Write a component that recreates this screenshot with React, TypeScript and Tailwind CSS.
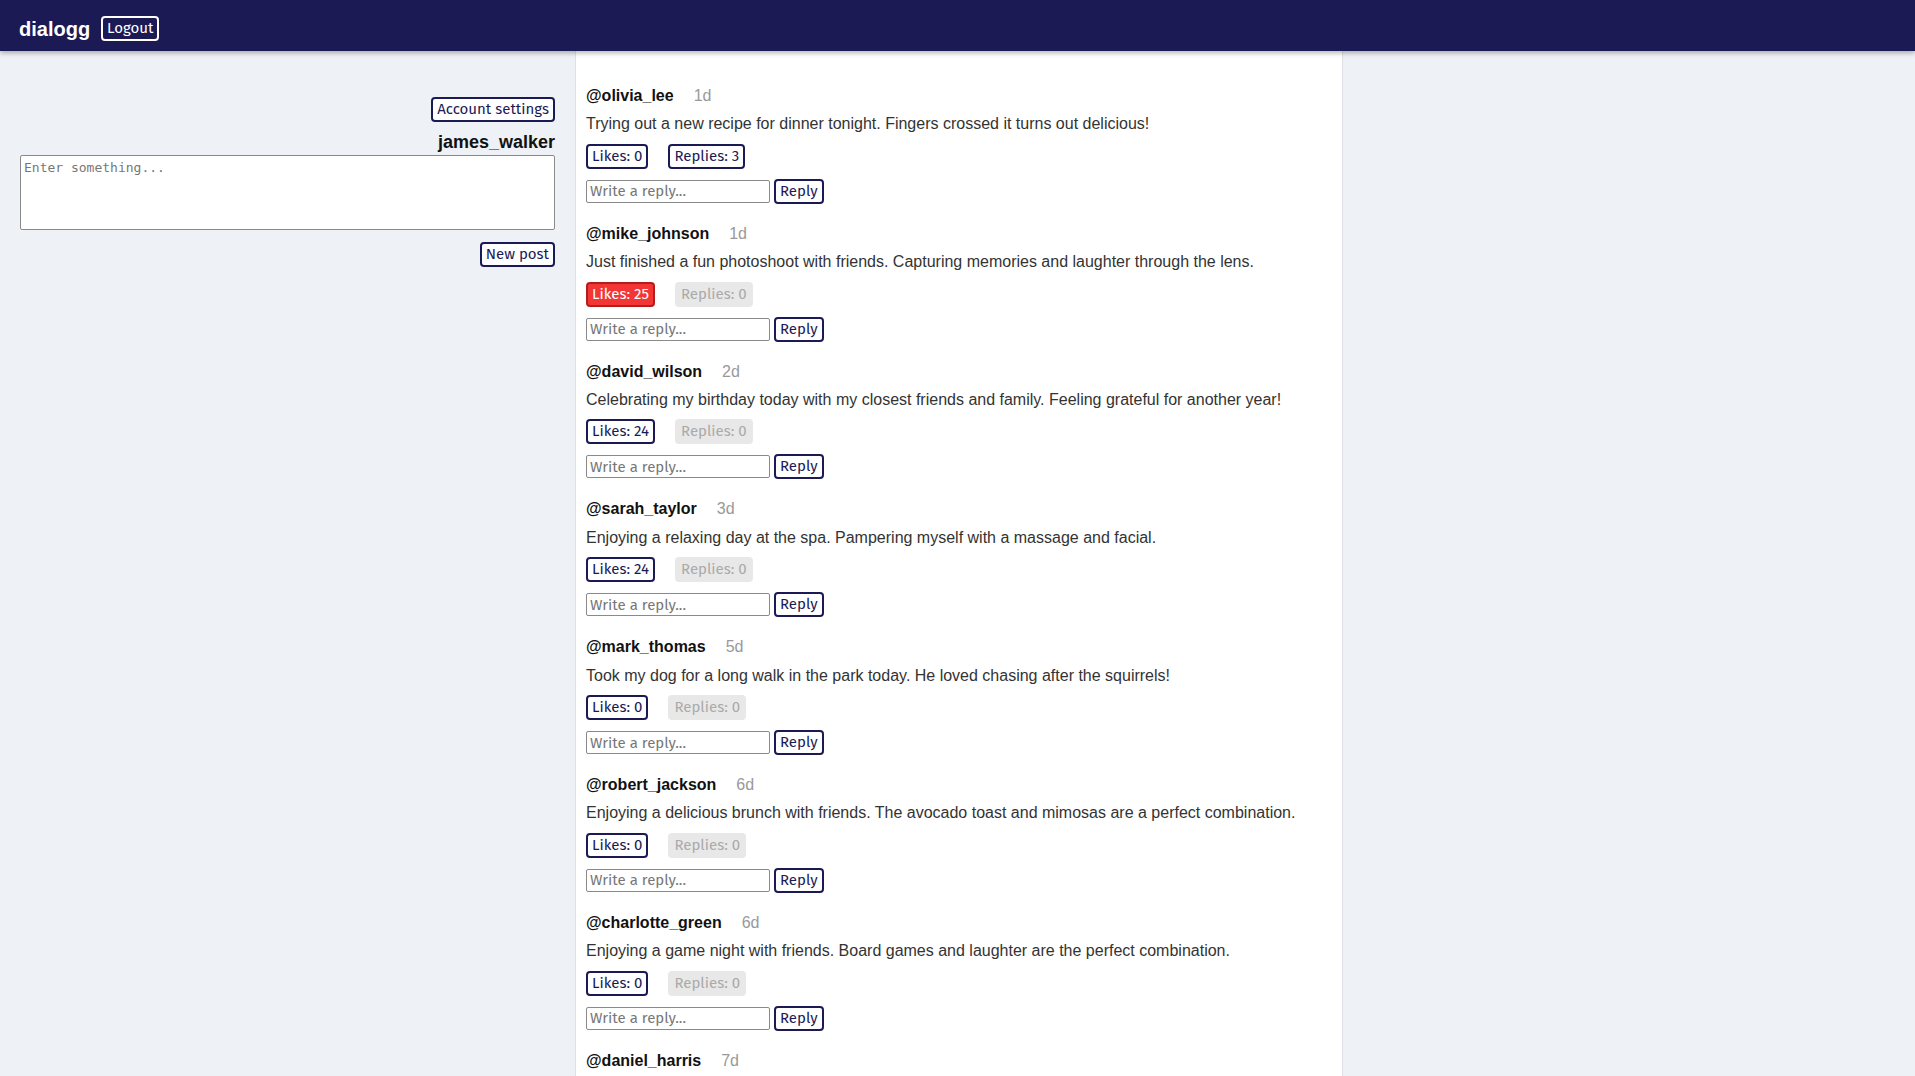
import React from "react"

type Post = {
  user: string
  age: string
  text: string
  likes: number
  liked?: boolean
  replies: number
}

const posts: Post[] = [
  { user: "olivia_lee", age: "1d", text: "Trying out a new recipe for dinner tonight. Fingers crossed it turns out delicious!", likes: 0, replies: 3 },
  { user: "mike_johnson", age: "1d", text: "Just finished a fun photoshoot with friends. Capturing memories and laughter through the lens.", likes: 25, liked: true, replies: 0 },
  { user: "david_wilson", age: "2d", text: "Celebrating my birthday today with my closest friends and family. Feeling grateful for another year!", likes: 24, replies: 0 },
  { user: "sarah_taylor", age: "3d", text: "Enjoying a relaxing day at the spa. Pampering myself with a massage and facial.", likes: 24, replies: 0 },
  { user: "mark_thomas", age: "5d", text: "Took my dog for a long walk in the park today. He loved chasing after the squirrels!", likes: 0, replies: 0 },
  { user: "robert_jackson", age: "6d", text: "Enjoying a delicious brunch with friends. The avocado toast and mimosas are a perfect combination.", likes: 0, replies: 0 },
  { user: "charlotte_green", age: "6d", text: "Enjoying a game night with friends. Board games and laughter are the perfect combination.", likes: 0, replies: 0 },
  { user: "daniel_harris", age: "7d", text: "Exploring a new hiking trail this weekend. The views from the top were absolutely breathtaking.", likes: 0, replies: 0 },
]

const btn =
  "h-[25px] px-[4px] rounded-[4px] border-2 border-[#1b1a55] text-[#1b1a55] bg-white text-[15px] leading-none font-['Fira_Sans','Lato',sans-serif]"

function PostItem({ post }: { post: Post }) {
  return (
    <div className="flex flex-col items-start gap-[10px] pb-[21px]">
      <div className="flex items-baseline gap-5 leading-[18.4px] text-[16px]">
        <span className="font-bold text-[#111]">@{post.user}</span>
        <span className="text-[#999]">{post.age}</span>
      </div>
      <p className="text-[16px] leading-[18.4px] text-[#333]">{post.text}</p>
      <div className="flex gap-5">
        {post.liked ? (
          <button className="h-[25px] px-[4px] rounded-[4px] border-2 border-[#b71c1c] bg-[#f23535] text-white text-[15px] leading-none font-['Fira_Sans','Lato',sans-serif]">
            Likes: {post.likes}
          </button>
        ) : (
          <button className={btn}>Likes: {post.likes}</button>
        )}
        {post.replies > 0 ? (
          <button className={btn}>Replies: {post.replies}</button>
        ) : (
          <button className="h-[25px] px-[6px] rounded-[4px] bg-[#e8e8e8] text-[#aaa] text-[15px] leading-none font-['Fira_Sans','Lato',sans-serif]">
            Replies: {post.replies}
          </button>
        )}
      </div>
      <div className="flex items-center gap-[4px]">
        <input
          placeholder="Write a reply..."
          className="w-[184px] h-[23px] px-[3px] border border-[#8a8a8a] rounded-[2px] bg-white text-[15px] font-['Fira_Sans','Lato',sans-serif] placeholder:text-[#777] outline-none"
        />
        <button className={btn}>Reply</button>
      </div>
    </div>
  )
}

export default function App() {
  return (
    <div className="min-h-screen bg-[#eef1f6] font-['Liberation_Sans',Arial,sans-serif]">
      <header className="relative z-10 h-[51px] bg-[#1b1a55] flex items-center pt-[6px] px-[19px] gap-[11px] shadow-[0_2px_5px_rgba(0,0,0,0.3)]">
        <span className="text-white text-[20px] font-bold">dialogg</span>
        <button className="h-[25px] px-[4px] rounded-[4px] border-2 border-white text-white text-[15px] leading-none font-['Fira_Sans','Lato',sans-serif]">
          Logout
        </button>
      </header>
      <main className="grid grid-cols-[575px_768px_1fr] min-h-[calc(100vh-51px)]">
        <aside className="flex flex-col items-end pt-[46px] px-[20px]">
          <button className={btn}>Account settings</button>
          <div className="mt-[10px] text-[18px] font-bold text-[#111] leading-[21px]">james_walker</div>
          <textarea
            placeholder="Enter something..."
            className="mt-[2px] w-full h-[75px] border border-[#8a8a8a] rounded-[2px] bg-white px-[3px] py-[2px] text-[13px] font-['DejaVu_Sans_Mono',monospace] placeholder:text-[#777] resize-none outline-none"
          />
          <button className={`${btn} mt-[12px]`}>New post</button>
        </aside>
        <section className="bg-white border-x border-[#dde0e4] pt-[36px] px-[10px]">
          {posts.map((p) => (
            <PostItem key={p.user} post={p} />
          ))}
        </section>
        <div />
      </main>
    </div>
  )
}
